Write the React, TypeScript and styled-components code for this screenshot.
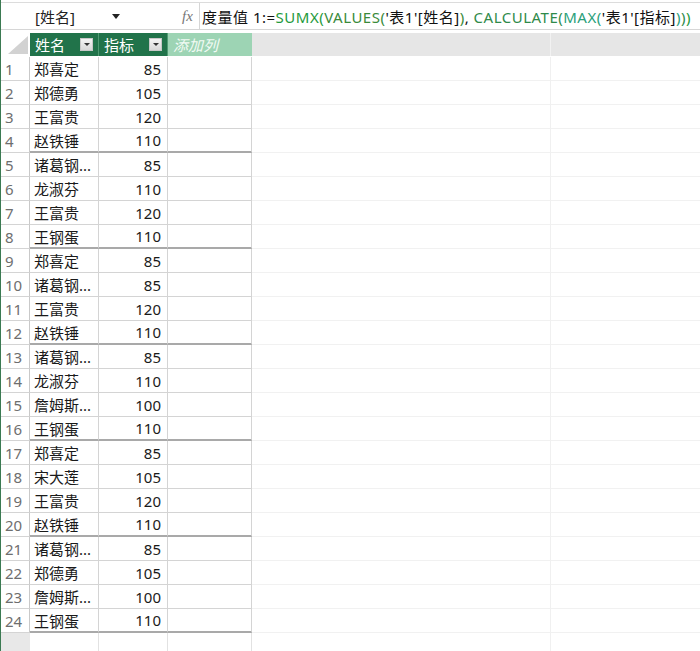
import React from "react";
import styled, { createGlobalStyle, css } from "styled-components";

type Row = { name: string; value: number };

const rows: Row[] = [
  { name: "郑喜定", value: 85 },
  { name: "郑德勇", value: 105 },
  { name: "王富贵", value: 120 },
  { name: "赵铁锤", value: 110 },
  { name: "诸葛钢...", value: 85 },
  { name: "龙淑芬", value: 110 },
  { name: "王富贵", value: 120 },
  { name: "王钢蛋", value: 110 },
  { name: "郑喜定", value: 85 },
  { name: "诸葛钢...", value: 85 },
  { name: "王富贵", value: 120 },
  { name: "赵铁锤", value: 110 },
  { name: "诸葛钢...", value: 85 },
  { name: "龙淑芬", value: 110 },
  { name: "詹姆斯...", value: 100 },
  { name: "王钢蛋", value: 110 },
  { name: "郑喜定", value: 85 },
  { name: "宋大莲", value: 105 },
  { name: "王富贵", value: 120 },
  { name: "赵铁锤", value: 110 },
  { name: "诸葛钢...", value: 85 },
  { name: "郑德勇", value: 105 },
  { name: "詹姆斯...", value: 100 },
  { name: "王钢蛋", value: 110 },
];

const FONT = `"Noto Sans", "Noto Sans CJK SC", sans-serif`;
const COLS = "29px 69px 69px 84px 299px 1fr";

const GlobalStyle = createGlobalStyle`
  html, body {
    margin: 0;
    padding: 0;
    background: #fff;
  }
  body {
    font-family: ${FONT};
  }
`;

const Page = styled.div`
  width: 700px;
  height: 651px;
  overflow: hidden;
  border-left: 1px solid #3b7a52;
  box-sizing: border-box;
  background: #fff;
`;

const FormulaBar = styled.div`
  margin-top: 2px;
  height: 28px;
  display: flex;
  align-items: center;
  border-top: 1px solid #dcdcdc;
  border-bottom: 1px solid #d6d6d6;
  box-sizing: border-box;
  font-size: 15px;
`;

const NameBox = styled.div`
  width: 175px;
  display: flex;
  align-items: center;
  padding-left: 34px;
  box-sizing: border-box;
  color: #222;
`;

const NameText = styled.span`
  width: 77px;
`;

const Caret = styled.span`
  width: 0;
  height: 0;
  border-left: 4px solid transparent;
  border-right: 4px solid transparent;
  border-top: 5px solid #222;
`;

const Fx = styled.div`
  width: 24px;
  height: 100%;
  display: flex;
  align-items: center;
  justify-content: center;
  font-family: "Liberation Serif", serif;
  font-style: italic;
  font-size: 15px;
  color: #777;
  border-right: 1px solid #d6d6d6;
  box-sizing: border-box;
`;

const Formula = styled.div`
  padding-left: 2px;
  white-space: nowrap;
  color: #111;
  letter-spacing: 0.5px;
`;

const Tok = styled.span<{ $c: string }>`
  color: ${(p) => p.$c};
`;

const Spacer = styled.div`
  height: 3px;
`;

const GridRow = styled.div`
  display: grid;
  grid-template-columns: ${COLS};
  height: 24px;
`;

const HeaderRow = styled(GridRow)`
  height: 23px;
  margin-bottom: 1px;
`;

const Corner = styled.div`
  background: #fff;
  display: flex;
  align-items: flex-end;
  justify-content: flex-end;
  padding: 0 2px 2px 0;
  box-sizing: border-box;
`;

const HeadCell = styled.div<{ $add?: boolean }>`
  display: flex;
  align-items: center;
  justify-content: space-between;
  padding: 0 5px 0 5px;
  box-sizing: border-box;
  font-size: 15px;
  color: #fff;
  background: ${(p) => (p.$add ? "#9dd4b4" : "#21734a")};
  border-right: 1px solid ${(p) => (p.$add ? "#9dd4b4" : "#4f9a72")};
  ${(p) =>
    p.$add &&
    css`
      font-style: italic;
      color: #f2fbf5;
    `}
`;

const FilterBtn = styled.span`
  width: 13px;
  height: 13px;
  background: linear-gradient(#f4f4f4, #d8d8d8);
  border: 1px solid #c8c8c8;
  box-sizing: border-box;
  display: flex;
  align-items: center;
  justify-content: center;

  &::after {
    content: "";
    border-left: 3px solid transparent;
    border-right: 3px solid transparent;
    border-top: 3px solid #333;
  }
`;

const HeadBlank = styled.div<{ $last?: boolean }>`
  background: #e6e6e6;
  border-right: ${(p) => (p.$last ? "none" : "1px solid #f2f2f2")};
`;

const NumCell = styled.div<{ $empty?: boolean }>`
  font-size: 15px;
  color: #6e6e6e;
  padding-left: 4px;
  display: flex;
  align-items: center;
  box-sizing: border-box;
  border-right: 1px solid #c9c9c9;
  border-bottom: 1px solid #d4d4d4;
  background: ${(p) => (p.$empty ? "#e8e8e8" : "#fff")};
  ${(p) => p.$empty && "border: none;"}
`;

const DataCell = styled.div<{ $right?: boolean; $group?: boolean }>`
  font-size: 15px;
  color: #1a1a1a;
  display: flex;
  align-items: center;
  justify-content: ${(p) => (p.$right ? "flex-end" : "flex-start")};
  padding: ${(p) => (p.$right ? "0 6px 0 0" : "0 0 0 4px")};
  box-sizing: border-box;
  border-right: 1px solid #d4d4d4;
  border-bottom: ${(p) => (p.$group ? "2px solid #a9a9a9" : "1px solid #d4d4d4")};
  white-space: nowrap;
  overflow: hidden;
`;

const EmptyCell = styled.div<{ $last?: boolean; $faint?: boolean }>`
  box-sizing: border-box;
  border-right: ${(p) => (p.$last ? "none" : `1px solid ${p.$faint ? "#f0f0f0" : "#e2e2e2"}`)};
  border-bottom: 1px solid #f1f1f1;
`;

const App: React.FC = () => (
  <>
    <GlobalStyle />
    <Page>
      <FormulaBar>
        <NameBox>
          <NameText>[姓名]</NameText>
          <Caret />
        </NameBox>
        <Fx>fx</Fx>
        <Formula>
          度量值 1:=<Tok $c="#1f9a3c">SUMX(</Tok>
          <Tok $c="#3a8a3a">VALUES(</Tok>'表1'[姓名]<Tok $c="#3a8a3a">)</Tok>,{" "}
          <Tok $c="#2f8a4a">CALCULATE(</Tok>
          <Tok $c="#2aa07a">MAX(</Tok>'表1'[指标]<Tok $c="#2aa07a">)</Tok>
          <Tok $c="#2f8a4a">)</Tok>
          <Tok $c="#1f9a3c">)</Tok>
        </Formula>
      </FormulaBar>
      <Spacer />
      <HeaderRow>
        <Corner>
          <svg width="20" height="18" viewBox="0 0 20 18">
            <polygon points="20,0 20,18 0,18" fill="#d2d2d2" />
          </svg>
        </Corner>
        <HeadCell>
          姓名
          <FilterBtn />
        </HeadCell>
        <HeadCell>
          指标
          <FilterBtn />
        </HeadCell>
        <HeadCell $add>添加列</HeadCell>
        <HeadBlank />
        <HeadBlank $last />
      </HeaderRow>
      {rows.map((r, i) => {
        const group = (i + 1) % 4 === 0;
        return (
          <GridRow key={i}>
            <NumCell>{i + 1}</NumCell>
            <DataCell $group={group}>{r.name}</DataCell>
            <DataCell $right $group={group}>
              {r.value}
            </DataCell>
            <DataCell $group={group} />
            <EmptyCell $faint />
            <EmptyCell $last />
          </GridRow>
        );
      })}
      <GridRow>
        <NumCell $empty />
        <EmptyCell />
        <EmptyCell />
        <EmptyCell />
        <EmptyCell $faint />
        <EmptyCell $last />
      </GridRow>
    </Page>
  </>
);

export default App;
